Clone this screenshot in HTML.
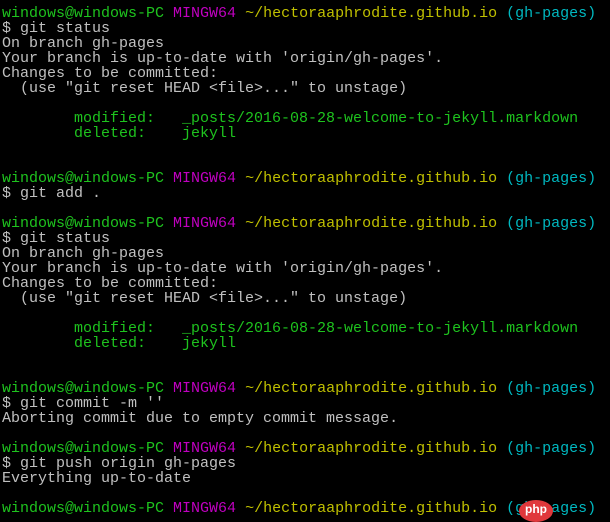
<!DOCTYPE html><html><head><style>
html,body{margin:0;padding:0;background:#000;width:610px;height:511px;overflow:hidden}
pre{margin:0;padding:6px 0 0 2px;font-family:"Liberation Mono",monospace;font-size:15px;line-height:15px;color:#c0c0c0;white-space:pre}
.g{color:#1ec31e}.m{color:#c000c0}.y{color:#c0c000}.c{color:#00b8c0}
.badge{position:absolute;left:519px;top:500px;width:34px;height:22px;border-radius:50%;background:#e0383c;color:#fff;font:bold 12px "Liberation Sans",sans-serif;text-align:center;line-height:18px}
</style></head><body><pre><span class="g">windows@windows-PC</span> <span class="m">MINGW64</span> <span class="y">~/hectoraaphrodite.github.io</span> <span class="c">(gh-pages)</span>
$ git status
On branch gh-pages
Your branch is up-to-date with 'origin/gh-pages'.
Changes to be committed:
  (use "git reset HEAD &lt;file&gt;..." to unstage)

<span class="g">        modified:   _posts/2016-08-28-welcome-to-jekyll.markdown</span>
<span class="g">        deleted:    jekyll</span>


<span class="g">windows@windows-PC</span> <span class="m">MINGW64</span> <span class="y">~/hectoraaphrodite.github.io</span> <span class="c">(gh-pages)</span>
$ git add .

<span class="g">windows@windows-PC</span> <span class="m">MINGW64</span> <span class="y">~/hectoraaphrodite.github.io</span> <span class="c">(gh-pages)</span>
$ git status
On branch gh-pages
Your branch is up-to-date with 'origin/gh-pages'.
Changes to be committed:
  (use "git reset HEAD &lt;file&gt;..." to unstage)

<span class="g">        modified:   _posts/2016-08-28-welcome-to-jekyll.markdown</span>
<span class="g">        deleted:    jekyll</span>


<span class="g">windows@windows-PC</span> <span class="m">MINGW64</span> <span class="y">~/hectoraaphrodite.github.io</span> <span class="c">(gh-pages)</span>
$ git commit -m ''
Aborting commit due to empty commit message.

<span class="g">windows@windows-PC</span> <span class="m">MINGW64</span> <span class="y">~/hectoraaphrodite.github.io</span> <span class="c">(gh-pages)</span>
$ git push origin gh-pages
Everything up-to-date

<span class="g">windows@windows-PC</span> <span class="m">MINGW64</span> <span class="y">~/hectoraaphrodite.github.io</span> <span class="c">(gh-pages)</span></pre>
<div class="badge">php</div>
</body></html>
